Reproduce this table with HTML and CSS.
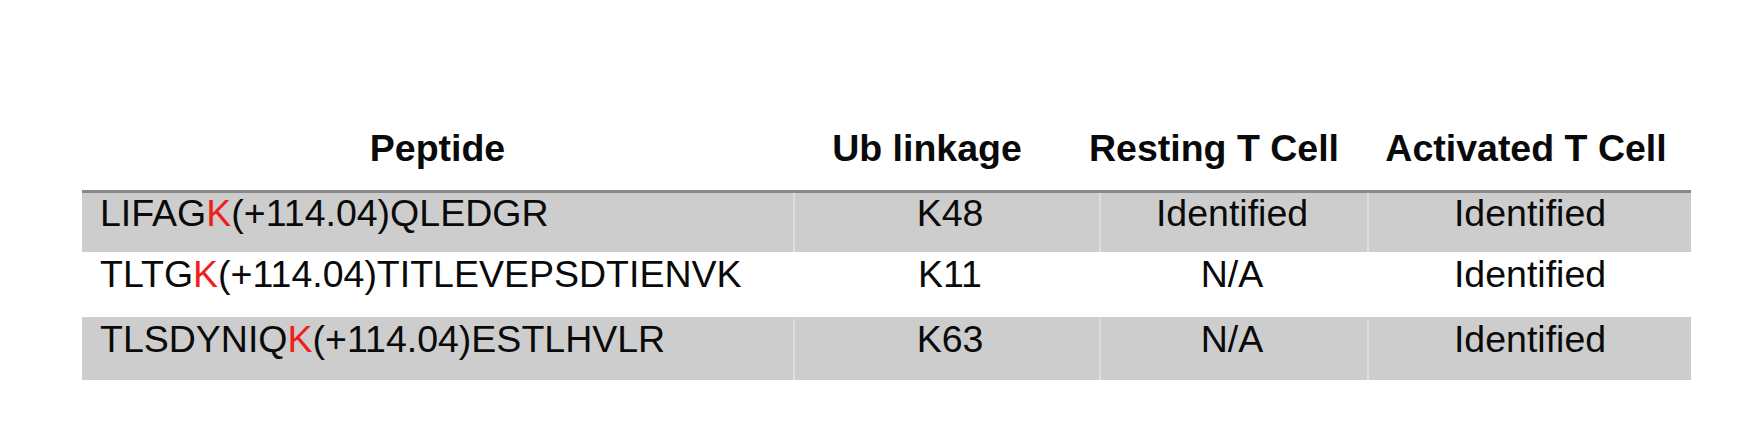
FILE: index.html
```html
<!DOCTYPE html>
<html lang="en">
<head>
<meta charset="utf-8">
<title>Ub linkage peptides</title>
<link rel="stylesheet" href="styles.css">
</head>
<body>
<div class="page">
  <div class="table">
    <div class="row head">
      <div class="cell c1">Peptide</div>
      <div class="cell c2">Ub linkage</div>
      <div class="cell c3">Resting T Cell</div>
      <div class="cell c4">Activated T Cell</div>
    </div>
    <div class="row data shaded first">
      <div class="cell c1">LIFAG<span class="k">K</span>(+114.04)QLEDGR</div>
      <div class="cell c2">K48</div>
      <div class="cell c3">Identified</div>
      <div class="cell c4">Identified</div>
    </div>
    <div class="row data second">
      <div class="cell c1">TLTG<span class="k">K</span>(+114.04)TITLEVEPSDTIENVK</div>
      <div class="cell c2">K11</div>
      <div class="cell c3">N/A</div>
      <div class="cell c4">Identified</div>
    </div>
    <div class="row data shaded third">
      <div class="cell c1">TLSDYNIQ<span class="k">K</span>(+114.04)ESTLHVLR</div>
      <div class="cell c2">K63</div>
      <div class="cell c3">N/A</div>
      <div class="cell c4">Identified</div>
    </div>
  </div>
</div>
</body>
</html>
```

FILE: styles.css
```css
html, body {
  margin: 0;
  padding: 0;
  background: #ffffff;
}

.page {
  width: 1737px;
  height: 435px;
  padding-top: 128px;
  box-sizing: border-box;
  font-family: "Liberation Sans", Arial, sans-serif;
  font-size: 37.5px;
  color: #0a0a0a;
}

.table {
  margin-left: 82px;
  width: 1609px;
}

.row {
  display: grid;
  grid-template-columns: 711px 306px 268px 324px;
  line-height: 40px;
}

.cell {
  white-space: nowrap;
  text-align: center;
}

.data .c1 {
  text-align: left;
  padding-left: 18px;
}

.data .c2 {
  padding-left: 6px;
}

.data .c3 {
  padding-right: 4px;
}

.data .cell + .cell {
  border-left: 2px solid rgba(255, 255, 255, 0.35);
}

.head {
  grid-template-columns: 711px 268px 306px 324px;
  font-weight: bold;
  height: 62px;
}

.head .c4 {
  padding-right: 6px;
}

.shaded {
  background: #cdcdcd;
}

.first {
  border-top: 3px solid #888888;
  height: 59px;
}

.second {
  height: 65px;
  padding-top: 2px;
  box-sizing: border-box;
}

.third {
  height: 63px;
  padding-top: 2px;
  box-sizing: border-box;
}

.k {
  color: #ee1f1c;
}
```
